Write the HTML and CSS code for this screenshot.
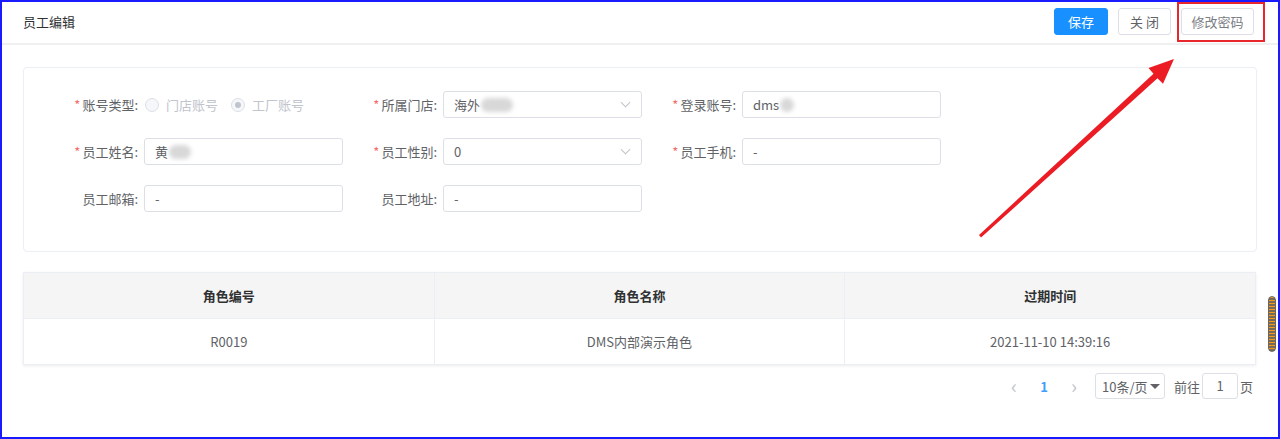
FILE: index.html
```html
<!DOCTYPE html>
<html lang="zh-CN">
<head>
    <meta charset="UTF-8">
    <title>员工编辑</title>
    <link rel="stylesheet" href="styles.css">
</head>
<body>
<div class="frame">
    <div class="header">
        <span class="title">员工编辑</span>
        <div class="actions">
            <button class="btn btn-primary">保存</button>
            <button class="btn btn-close">关 闭</button>
            <button class="btn btn-pwd">修改密码</button>
        </div>
    </div>

    <div class="main">
        <div class="form-card">
            <div class="form-grid">
                <div class="item">
                    <label class="label required">账号类型:</label>
                    <div class="radios">
                        <span class="radio"><i class="dot"></i>门店账号</span>
                        <span class="radio checked"><i class="dot"></i>工厂账号</span>
                    </div>
                </div>
                <div class="item">
                    <label class="label required">所属门店:</label>
                    <div class="input select">海外<span class="blur w50"></span><i class="arrow"></i></div>
                </div>
                <div class="item">
                    <label class="label required">登录账号:</label>
                    <div class="input">dms<span class="blur w20"></span></div>
                </div>

                <div class="item">
                    <label class="label required">员工姓名:</label>
                    <div class="input">黄<span class="blur w26"></span></div>
                </div>
                <div class="item">
                    <label class="label required">员工性别:</label>
                    <div class="input select">0<i class="arrow"></i></div>
                </div>
                <div class="item">
                    <label class="label required">员工手机:</label>
                    <div class="input">-</div>
                </div>

                <div class="item">
                    <label class="label">员工邮箱:</label>
                    <div class="input">-</div>
                </div>
                <div class="item">
                    <label class="label">员工地址:</label>
                    <div class="input">-</div>
                </div>
            </div>
        </div>

        <table class="role-table">
            <thead>
                <tr><th>角色编号</th><th>角色名称</th><th>过期时间</th></tr>
            </thead>
            <tbody>
                <tr><td>R0019</td><td>DMS内部演示角色</td><td>2021-11-10 14:39:16</td></tr>
            </tbody>
        </table>

        <div class="pager">
            <span class="nav">&#8249;</span>
            <span class="page">1</span>
            <span class="nav">&#8250;</span>
            <span class="sizes">10条/页<i class="caret"></i></span>
            <span class="jump">前往 <span class="jump-input">1</span> 页</span>
        </div>
    </div>

    <!-- 标注 -->
    <div class="mark-box"></div>
    <svg class="mark-arrow" width="220" height="200" viewBox="0 0 220 200">
        <path d="M9 185 L183.5 23.7 L178.5 18 L204 9 L193 33.8 L187.5 28.3 L11 187.5 Z" fill="#ec1c24"/>
    </svg>
    <div class="scroll-thumb"></div>
</div>
</body>
</html>
```

FILE: styles.css
```css
body {
    margin: 0;
    font-family: "Noto Sans CJK SC", "Noto Sans", sans-serif;
    font-size: 13px;
    color: #606266;
    background: #fff;
}
.frame {
    position: relative;
    width: 1280px;
    height: 439px;
    border: 2px solid #1a1aff;
    box-sizing: border-box;
    overflow: hidden;
}
.header {
    height: 41px;
    padding: 0 21px 0 21px;
    display: flex;
    align-items: center;
    justify-content: space-between;
    border-bottom: 2px solid #f0f0f0;
}
.title {
    color: #303133;
    font-size: 13px;
    margin-top: -2px;
}
.actions {
    display: flex;
    gap: 10px;
    margin-top: -2px;
    margin-right: 3px;
}
.btn {
    height: 27px;
    padding: 0;
    font-family: inherit;
    font-size: 13px;
    color: #606266;
    background: #fff;
    border: 1px solid #dcdfe6;
    border-radius: 3px;
    line-height: 25px;
}
.btn-primary {
    width: 54px;
    background: #1890ff;
    border-color: #1890ff;
    color: #fff;
}
.btn-close {
    width: 53px;
}
.btn-pwd {
    width: 73px;
    color: #7a7d83;
}
.main {
    padding: 22px 21px 0;
}
.form-card {
    height: 185px;
    box-sizing: border-box;
    border: 1px solid #ebeef5;
    border-radius: 4px;
    padding: 23px 20px 0;
}
.form-grid {
    display: grid;
    grid-template-columns: repeat(3, 299px);
    row-gap: 20px;
}
.item {
    display: flex;
    align-items: center;
    height: 27px;
}
.label {
    width: 100px;
    padding-right: 6px;
    box-sizing: border-box;
    text-align: right;
    color: #606266;
}
.label.required::before {
    content: "*";
    color: #f56c6c;
    margin-right: 2px;
}
.input {
    position: relative;
    width: 199px;
    height: 27px;
    box-sizing: border-box;
    border: 1px solid #dcdfe6;
    border-radius: 3px;
    padding: 0 10px;
    display: flex;
    align-items: center;
    color: #606266;
}
.arrow {
    position: absolute;
    right: 12px;
    top: 7px;
    width: 6px;
    height: 6px;
    border-right: 1px solid #c0c4cc;
    border-bottom: 1px solid #c0c4cc;
    transform: rotate(45deg);
}
.blur {
    display: inline-block;
    height: 14px;
    border-radius: 7px;
    background: #d8d8d8;
    filter: blur(2px);
    margin-left: 1px;
}
.w50 { width: 32px; }
.w20 { width: 14px; }
.w26 { width: 22px; }
.radios {
    display: flex;
    gap: 13px;
    margin-left: 1px;
}
.radio {
    display: flex;
    align-items: center;
    color: #c0c4cc;
}
.radio .dot {
    width: 12px;
    height: 12px;
    border: 1px solid #dcdfe6;
    background: #f5f7fa;
    border-radius: 50%;
    margin-right: 7px;
    position: relative;
}
.radio.checked .dot::after {
    content: "";
    position: absolute;
    left: 3px;
    top: 3px;
    width: 6px;
    height: 6px;
    border-radius: 50%;
    background: #c0c4cc;
}
.role-table {
    margin-top: 20px;
    width: 1233px;
    border-collapse: collapse;
    border: 1px solid #ebeef5;
    box-shadow: 0 1px 3px rgba(0, 0, 0, 0.08);
    table-layout: fixed;
}
.role-table th,
.role-table td {
    height: 45px;
    padding: 0;
    text-align: center;
    border-right: 1px solid #ebeef5;
}
.role-table th {
    background: #f5f5f5;
    color: #303133;
    font-weight: bold;
    border-bottom: 1px solid #ebeef5;
}
.role-table td {
    color: #606266;
}
.pager {
    display: flex;
    align-items: center;
    justify-content: flex-end;
    margin-top: 8px;
    padding-right: 4px;
    height: 26px;
    white-space: nowrap;
}
.nav {
    width: 30px;
    text-align: center;
    color: #c0c4cc;
    font-size: 20px;
    line-height: 20px;
}
.page {
    width: 30px;
    text-align: center;
    color: #409eff;
    font-weight: bold;
}
.sizes {
    margin-left: 6px;
    width: 70px;
    height: 26px;
    box-sizing: border-box;
    border: 1px solid #dcdfe6;
    border-radius: 3px;
    padding: 0 3px 0 6px;
    display: flex;
    align-items: center;
    gap: 2px;
    white-space: nowrap;
}
.caret {
    flex: none;
    width: 0;
    height: 0;
    border-left: 5px solid transparent;
    border-right: 5px solid transparent;
    border-top: 5px solid #606266;
}
.jump {
    margin-left: 9px;
    display: flex;
    align-items: center;
    gap: 2px;
}
.jump-input {
    width: 36px;
    height: 26px;
    box-sizing: border-box;
    border: 1px solid #dcdfe6;
    border-radius: 3px;
    text-align: center;
    line-height: 24px;
}
.mark-box {
    position: absolute;
    left: 1175px;
    top: 0;
    width: 88px;
    height: 40px;
    border: 2px solid #e8262d;
    box-sizing: border-box;
}
.mark-arrow {
    position: absolute;
    left: 968px;
    top: 48px;
}
.scroll-thumb {
    position: absolute;
    left: 1266px;
    top: 294px;
    width: 8px;
    height: 56px;
    border-radius: 4px;
    background: repeating-linear-gradient(#f29a1a 0 1px, #7a6a55 1px 3px);
    border: 1px solid #666;
    box-sizing: border-box;
}
```
